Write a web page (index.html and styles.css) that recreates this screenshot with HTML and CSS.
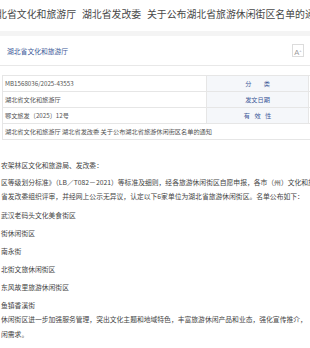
FILE: index.html
```html
<!DOCTYPE html>
<html lang="zh-CN">
<head>
  <meta charset="UTF-8" />
  <meta name="viewport" content="width=device-width, initial-scale=1.0"/>
  <title>关于公布湖北省旅游休闲街区名单的通知</title>
  <link rel="stylesheet" href="styles.css">
</head>
<body>

  <div class="page">
    <h1 class="doc-title">湖北省文化和旅游厅 湖北省发改委 关于公布湖北省旅游休闲街区名单的通知</h1>

    <div class="toolbar">
      <a class="source" href="#">湖北省文化和旅游厅</a>
      <div class="font-tools">
        <button class="fbtn">A<sup>+</sup></button>
        <button class="fbtn">A<sup>-</sup></button>
      </div>
    </div>

    <table class="meta">
      <colgroup>
        <col class="c-value">
        <col class="c-label">
        <col class="c-value2">
      </colgroup>
      <tr>
        <td>MB1568036/2025-43553</td>
        <td class="label">分　　类</td>
        <td></td>
      </tr>
      <tr>
        <td>湖北省文化和旅游厅</td>
        <td class="label">发文日期</td>
        <td></td>
      </tr>
      <tr>
        <td>鄂文旅发〔2025〕12号</td>
        <td class="label spaced">有 效 性</td>
        <td></td>
      </tr>
      <tr>
        <td colspan="3">湖北省文化和旅游厅 湖北省发改委 关于公布湖北省旅游休闲街区名单的通知</td>
      </tr>
    </table>

    <div class="content">
      <p class="salute">农架林区文化和旅游局、发改委：</p>
      <p class="lead">
        区等级划分标准》（LB／T082－2021）等标准及细则，经各旅游休闲街区自愿申报，各市（州）文化和旅<br>
        省发改委组织评审，并经网上公示无异议，认定以下6家单位为湖北省旅游休闲街区。名单公布如下：
      </p>
      <ul class="list">
        <li>武汉老码头文化美食街区</li>
        <li>街休闲街区</li>
        <li>南永街</li>
        <li>北街文旅休闲街区</li>
        <li>东风故里旅游休闲街区</li>
        <li>鱼镇香溪街</li>
      </ul>
      <p class="closing">
        休闲街区进一步加强服务管理，突出文化主题和地域特色，丰富旅游休闲产品和业态，强化宣传推介，<br>
        闲需求。
      </p>
    </div>
  </div>

</body>
</html>
```

FILE: styles.css
```css
* {
  box-sizing: border-box;
}

:root {
  --text: #444;
  --link-blue: #3d5a99;
  --line: #e6e6e6;
  --label-bg: #f5f7fa;
}

body {
  margin: 0;
  font-family: "Noto Sans CJK SC", sans-serif;
  background-color: #fff;
  color: var(--text);
  overflow: hidden;
}

.page {
  width: 310px;
  overflow: hidden;
}

.doc-title {
  margin: 0 0 0 -12.8px;
  padding-bottom: 3px;
  font-size: 9.9px;
  font-weight: normal;
  line-height: 28px;
  word-spacing: 3.6px;
  white-space: nowrap;
  color: #484848;
}

.toolbar {
  display: flex;
  align-items: center;
  justify-content: space-between;
  height: 35px;
  padding-left: 7px;
  border-top: 5px solid #f4f4f4;
  border-bottom: 1px solid #e8e8e8;
}

.source {
  font-size: 6.8px;
  color: var(--link-blue);
  text-decoration: none;
}

.font-tools {
  display: flex;
  gap: 6px;
  margin-right: -12px;
}

.fbtn {
  width: 12px;
  height: 13px;
  padding: 0;
  border: 1px solid #dcdcdc;
  background-color: #fff;
  color: #9a9a9a;
  font-family: "Liberation Sans", sans-serif;
  font-size: 7.5px;
  line-height: 11px;
}

.fbtn sup {
  font-size: 4px;
  vertical-align: 3px;
}

.meta {
  width: 420px;
  margin: 9px 0 0 2px;
  border-collapse: collapse;
  table-layout: fixed;
  font-size: 6.2px;
  color: #555;
}

.meta .c-value {
  width: 204px;
}

.meta .c-label {
  width: 102px;
}

.meta .c-value2 {
  width: 114px;
}

.meta td {
  height: 16px;
  padding: 0 2px;
  border: 1px solid var(--line);
  line-height: 14px;
  white-space: nowrap;
  overflow: hidden;
}

.meta .label {
  background-color: var(--label-bg);
  color: var(--link-blue);
  text-align: center;
}

.meta .spaced {
  word-spacing: 3px;
}

.content {
  margin-top: 18px;
  padding-left: 1px;
  font-size: 6.8px;
  white-space: nowrap;
}

.content p {
  margin: 0;
}

.salute {
  line-height: 14px;
}

.lead {
  margin-top: 4px !important;
  line-height: 13.5px;
}

.list {
  list-style: none;
  margin: 5px 0 0;
  padding: 0;
}

.list li {
  line-height: 14px;
}

.list li + li {
  margin-top: 4px;
}

.closing {
  line-height: 15px;
}
```
